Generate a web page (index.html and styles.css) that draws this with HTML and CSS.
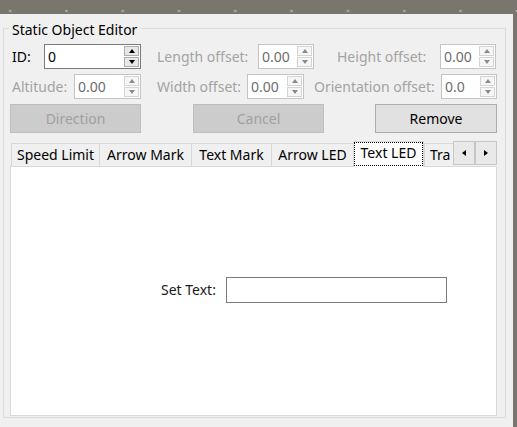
FILE: index.html
```html
<!DOCTYPE html>
<html>
<head>
<meta charset="utf-8">
<link rel="stylesheet" href="styles.css">
</head>
<body>
<div class="topbar"></div>
<div class="dialog">
  <div class="group">
    <div class="group-title">Static Object Editor</div>
    <div class="row">
      <span class="lbl l-id">ID:</span>
      <div class="spin enabled s-id"><span class="val">0</span><div class="arrows"><span class="ab"><i class="up"></i></span><span class="ab"><i class="dn"></i></span></div></div>
      <span class="lbl dis l-len">Length offset:</span>
      <div class="spin s-56"><span class="val">0.00</span><div class="arrows"><span class="ab"><i class="up"></i></span><span class="ab"><i class="dn"></i></span></div></div>
      <span class="lbl dis l-hei">Height offset:</span>
      <div class="spin s-56"><span class="val">0.00</span><div class="arrows"><span class="ab"><i class="up"></i></span><span class="ab"><i class="dn"></i></span></div></div>
    </div>
    <div class="row row2">
      <span class="lbl dis l-alt">Altitude:</span>
      <div class="spin s-alt"><span class="val">0.00</span><div class="arrows"><span class="ab"><i class="up"></i></span><span class="ab"><i class="dn"></i></span></div></div>
      <span class="lbl dis l-wid">Width offset:</span>
      <div class="spin s-57"><span class="val">0.00</span><div class="arrows"><span class="ab"><i class="up"></i></span><span class="ab"><i class="dn"></i></span></div></div>
      <span class="lbl dis l-ori">Orientation offset:</span>
      <div class="spin s-56"><span class="val">0.0</span><div class="arrows"><span class="ab"><i class="up"></i></span><span class="ab"><i class="dn"></i></span></div></div>
    </div>
    <div class="buttons">
      <button class="btn disabled b-dir">Direction</button>
      <button class="btn disabled b-can">Cancel</button>
      <button class="btn b-rem">Remove</button>
    </div>
    <div class="tabwidget">
      <div class="tabbar">
        <div class="tabstrip">
          <div class="tab t1">Speed Limit</div>
          <div class="tab t2">Arrow Mark</div>
          <div class="tab t3">Text Mark</div>
          <div class="tab t4">Arrow LED</div>
          <div class="tab t5 selected">Text LED</div>
          <div class="tab t6">Tra</div>
        </div>
        <div class="scrollbtn"><i class="left"></i></div>
        <div class="scrollbtn"><i class="right"></i></div>
      </div>
      <div class="pane">
        <span class="set-lbl">Set Text:</span>
        <div class="textfield"></div>
      </div>
    </div>
  </div>
</div>
</body>
</html>
```

FILE: styles.css
```css
html, body {
  margin: 0;
  padding: 0;
}
body {
  width: 517px;
  height: 427px;
  overflow: hidden;
  background: #7a766e;
  font-family: "Noto Sans", "Open Sans", sans-serif;
  font-size: 14px;
  color: #000;
}
.topbar {
  height: 14px;
  background-color: #7a766e;
  background-image: radial-gradient(circle, #a8a49c 0, #a8a49c 1px, transparent 1.6px);
  background-size: 56.3px 22px;
  background-position: -18px 0;
}
.dialog {
  width: 513px;
  height: 413px;
  background: #f0f0f0;
  box-sizing: border-box;
  padding: 14px 7px 0 3px;
}
.group {
  height: 390px;
  box-sizing: border-box;
  border: 1px solid #dcdcdc;
  padding: 0 8px 1px 6px;
}
.group-title {
  margin: -8px 0 0 -1px;
  padding: 0 3px;
  width: fit-content;
  line-height: 17px;
  background: #f0f0f0;
  color: #000;
}
.row {
  display: flex;
  align-items: center;
  height: 25px;
  margin-top: 6px;
  padding-left: 2px;
}
.row2 {
  margin-top: 5px;
}
.lbl {
  flex: none;
  white-space: nowrap;
  line-height: 25px;
}
.dis {
  color: #a3a3a3;
}
.l-id { width: 32px; }
.l-len { width: 101px; margin-left: 16px; }
.l-hei { width: 103px; margin-left: 23px; }
.l-alt { width: 62px; }
.l-wid { width: 90px; margin-left: 16px; }
.l-ori { width: 127px; margin-left: 10px; }
.spin {
  flex: none;
  height: 25px;
  box-sizing: border-box;
  border: 1px solid #c4c4c4;
  background: #fff;
  display: flex;
  align-items: center;
  justify-content: space-between;
  padding-left: 3px;
  color: #6e6e6e;
}
.spin.enabled {
  border-color: #7a7a7a;
  color: #000;
}
.s-id { width: 97px; }
.s-56 { width: 56px; }
.s-57 { width: 57px; }
.s-alt { width: 67px; }
.val {
  line-height: 20px;
}
.arrows {
  width: 15px;
  height: 21px;
  margin-right: 1px;
  display: flex;
  flex-direction: column;
  gap: 1px;
}
.ab {
  flex: 1;
  box-sizing: border-box;
  border: 1px solid #d4d4d4;
  background: #f6f6f6;
  display: flex;
  align-items: center;
  justify-content: center;
}
.enabled .ab {
  border-color: #adadad;
  background: #e8e8e8;
}
.ab i {
  width: 0;
  height: 0;
  border-left: 3px solid transparent;
  border-right: 3px solid transparent;
}
.ab .up { border-bottom: 4px solid #8a8a8a; }
.ab .dn { border-top: 4px solid #8a8a8a; }
.enabled .ab .up { border-bottom-color: #000; }
.enabled .ab .dn { border-top-color: #000; }
.buttons {
  display: flex;
  height: 29px;
  margin-top: 5px;
}
.btn {
  flex: none;
  height: 29px;
  box-sizing: border-box;
  border: 1px solid #adadad;
  background: #e1e1e1;
  font-family: inherit;
  font-size: 14px;
  color: #000;
  padding: 0;
  line-height: 27px;
}
.btn.disabled {
  background: #cccccc;
  border-color: #bfbfbf;
  color: #a0a0a0;
}
.b-dir { width: 131px; }
.b-can { width: 131px; margin-left: 52px; }
.b-rem { width: 122px; margin-left: 51px; }
.tabwidget {
  margin-top: 8px;
}
.tabbar {
  display: flex;
  align-items: flex-end;
  height: 25px;
  position: relative;
  z-index: 1;
}
.tabstrip {
  width: 443px;
  height: 26px;
  display: flex;
  align-items: flex-end;
  overflow: hidden;
  margin-bottom: -1px;
}
.tab {
  flex: none;
  height: 23px;
  box-sizing: border-box;
  border: 1px solid #d9d9d9;
  border-bottom: none;
  background: #f0f0f0;
  text-align: center;
  line-height: 22px;
  white-space: nowrap;
  margin-right: -1px;
  margin-bottom: 1px;
}
.t1 { width: 89px; margin-left: 1px; }
.t2 { width: 93px; }
.t3 { width: 81px; }
.t4 { width: 83px; }
.t5 { width: 71px; }
.t6 { width: 32px; text-align: left; padding-left: 5px; overflow: hidden; }
.tab.selected {
  height: 26px;
  margin-bottom: 0;
  margin-right: 0;
  background: #fff;
  line-height: 22px;
  outline: 1px dotted #000;
  outline-offset: -2px;
  position: relative;
  z-index: 2;
}
.scrollbtn {
  flex: none;
  width: 22px;
  height: 24px;
  box-sizing: border-box;
  border: 1px solid #c6c6c6;
  background: #e9e9e9;
  display: flex;
  align-items: center;
  justify-content: center;
  margin-bottom: 1px;
  position: relative;
  z-index: 3;
}
.scrollbtn i {
  width: 0;
  height: 0;
  border-top: 3.5px solid transparent;
  border-bottom: 3.5px solid transparent;
}
.scrollbtn .left { border-right: 4px solid #000; }
.scrollbtn .right { border-left: 4px solid #000; }
.pane {
  height: 250px;
  width: 487px;
  box-sizing: border-box;
  border: 1px solid #d9d9d9;
  background: #fff;
  display: flex;
  align-items: center;
  padding-left: 150px;
  padding-bottom: 3px;
}
.set-lbl {
  color: #1a1a1a;
  width: 65px;
  white-space: nowrap;
}
.textfield {
  width: 221px;
  height: 26px;
  box-sizing: border-box;
  border: 1px solid #7a7a7a;
  background: #fff;
}
```
